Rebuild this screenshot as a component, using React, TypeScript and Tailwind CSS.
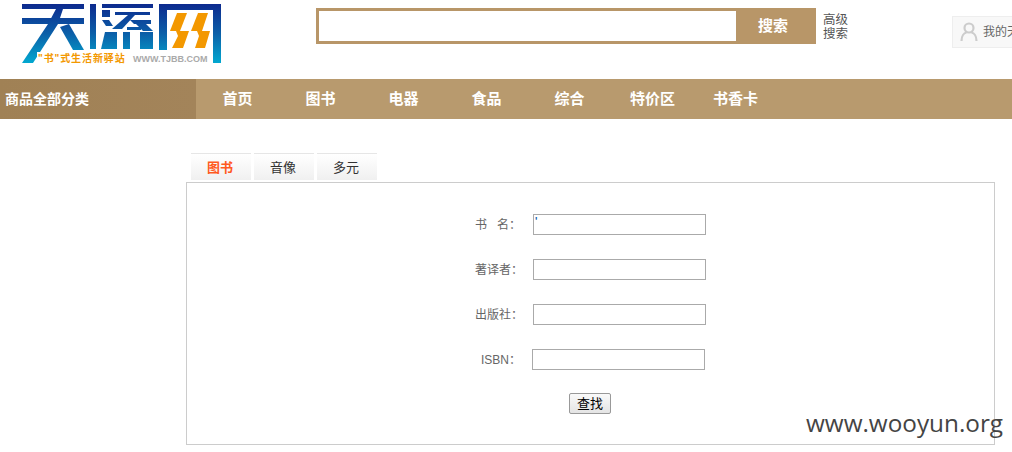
import React from "react";

const navItems = ["首页", "图书", "电器", "食品", "综合", "特价区", "书香卡"];
const tabs = ["图书", "音像", "多元"];

const cjk = "font-['Liberation_Sans','Noto_Sans_CJK_SC',sans-serif]";

// 天添网 logo mark, viewBox is in page pixels
const Logo = () => (
  <svg width="199" height="59" viewBox="22 4 199 59" className="block">
    <defs>
      <linearGradient id="logoBlue" gradientUnits="userSpaceOnUse" x1="0" y1="4" x2="0" y2="63">
        <stop offset="0" stopColor="#0d2a8e" />
        <stop offset="0.5" stopColor="#0b5fa8" />
        <stop offset="1" stopColor="#02a8d0" />
      </linearGradient>
    </defs>
    <g fill="url(#logoBlue)">
      {/* 天 */}
      <rect x="22" y="4" width="62" height="5" />
      <rect x="22" y="18" width="62" height="6" />
      <polygon points="56,9 63,9 58,24 33,63 22,63 48,24" />
      <polygon points="60,27 69,24 84,50 73,50" />
      {/* 添 */}
      <rect x="90" y="4" width="6" height="45" />
      <rect x="102" y="4" width="51" height="4" />
      <rect x="102" y="10" width="8" height="7" />
      <polygon points="102,20 109,20 113,26 106,26" />
      <rect x="115" y="12" width="35" height="3" />
      <polygon points="128,15 135,15 122,29 112,29" />
      <polygon points="130,20 151,20 151,24 134,24" />
      <polygon points="136,24 146,24 153,31 143,31" />
      <rect x="127" y="27" width="14" height="3" />
      <polygon points="105,32 117,32 117,49 101,49" />
      <rect x="123" y="32" width="7" height="17" />
      <rect x="140" y="32" width="13" height="17" />
      {/* 网 frame */}
      <path d="M159 4h62v59h-8V10h-46v40h-8z" />
    </g>
    <g fill="#f39800">
      <polygon points="177,13 187,13 180,31 170,31" />
      <polygon points="176,31 189,31 183,48 172,48 178,36" />
      <polygon points="198,13 208,13 202,31 191,31" />
      <polygon points="197,31 210,31 205,48 195,48 199,36" />
    </g>
  </svg>
);

const FormRow = ({ label, value, isbn }: { label: React.ReactNode; value?: string; isbn?: boolean }) => (
  <div className="flex items-center h-[21px]">
    <span className={`pt-[2px] text-[12px] leading-[21px] text-[#666] whitespace-pre ${isbn ? "w-[57px] pl-[6px]" : "w-[58px]"}`}>{label}</span>
    <div className="w-[173px] h-[21px] border border-[#aaa] bg-white pl-[1px] text-[10px] leading-[14px] text-[#1261b0] font-bold">
      {value}
    </div>
  </div>
);

export default function App() {
  return (
    <div className={`relative w-[1012px] h-[452px] overflow-hidden bg-white ${cjk}`}>
      {/* header */}
      <div className="flex h-[79px]">
        <div className="relative w-[316px] shrink-0 pl-[22px] pt-[4px]">
          <Logo />
          <div className="absolute left-[37px] top-[52px] flex items-center h-[14px] whitespace-nowrap">
            <span className="bg-white pl-[1px] text-[10px] leading-[14px] font-bold tracking-[0.9px] text-[#f39800] w-[96px]">"书"式生活新驿站</span>
            <span className="bg-white text-[9px] leading-[14px] font-bold text-[#aaa]">WWW.TJBB.COM</span>
          </div>
        </div>
        <div className="flex mt-[8px] w-[500px] h-[36px] border-[3px] border-r-0 border-[#b89668] shrink-0">
          <div className="w-[416px] bg-white" />
          <button className="flex-1 bg-[#b89668] text-white text-[15px] font-bold leading-[30px] ml-[1px] pr-[6px]">搜索</button>
        </div>
        <div className="ml-[7px] mt-[13px] w-[26px] shrink-0 whitespace-nowrap text-[12.500px] leading-[14px] text-[#555]">
          高级
          <br />
          搜索
        </div>
        <div className="ml-[103px] mt-[16px] flex items-center h-[32px] w-[120px] shrink-0 border border-[#eee] bg-[#f8f8f8] pl-[7px]">
          <svg width="18" height="20" viewBox="0 0 18 20" fill="none" stroke="#ccc" strokeWidth="2.2">
            <circle cx="9" cy="6" r="4.5" />
            <path d="M1.5 19c0-5 2.5-8 5-8.500M16.500 19c0-5-2.500-8-5-8.500" />
          </svg>
          <span className="ml-[5px] text-[12px] text-[#666] whitespace-nowrap">我的天添网</span>
        </div>
      </div>

      {/* nav */}
      <div className="flex h-[40px] bg-[#b89a6e]">
        <div className="w-[196px] bg-gradient-to-r from-[#a08155] to-[#a3845a] pl-[5px] text-white text-[14px] font-bold leading-[40px]">
          商品全部分类
        </div>
        {navItems.map((item) => (
          <div key={item} className="w-[83px] text-center text-white text-[15px] font-bold leading-[40px]">
            {item}
          </div>
        ))}
      </div>

      {/* search form */}
      <div className="ml-[186px] mt-[34px] w-[809px]">
        <div className="flex gap-[3px] pl-[5px] mb-[2px]">
          {tabs.map((tab, i) => (
            <div
              key={tab}
              className={`w-[60px] h-[27px] border-t border-[#e6e6e6] bg-gradient-to-b from-white to-[#f0f0f0] pr-[2px] text-center text-[13px] leading-[28px] ${
                i === 0 ? "text-[#ff5a1f] font-bold" : "text-[#333]"
              }`}
            >
              {tab}
            </div>
          ))}
        </div>
        <div className="h-[263px] border border-[#ccc] pt-[31px] pl-[288px]">
          <div className="flex flex-col gap-[24px]">
            <FormRow label="书   名：" value="'" />
            <FormRow label="著译者：" />
            <FormRow label="出版社：" />
            <FormRow label="ISBN：" isbn />
          </div>
          <button className="block ml-[94px] mt-[23px] w-[42px] h-[21px] border border-[#999] rounded-[2px] bg-gradient-to-b from-[#fafafa] to-[#e4e4e4] text-[13px] leading-[18px] text-black">
            查找
          </button>
        </div>
      </div>

      {/* watermark */}
      <div className="absolute left-[806px] top-[406px] font-['Open_Sans',sans-serif] text-[24.300px] leading-[33px] text-[#444] whitespace-nowrap">
        www.wooyun.org
      </div>
    </div>
  );
}
